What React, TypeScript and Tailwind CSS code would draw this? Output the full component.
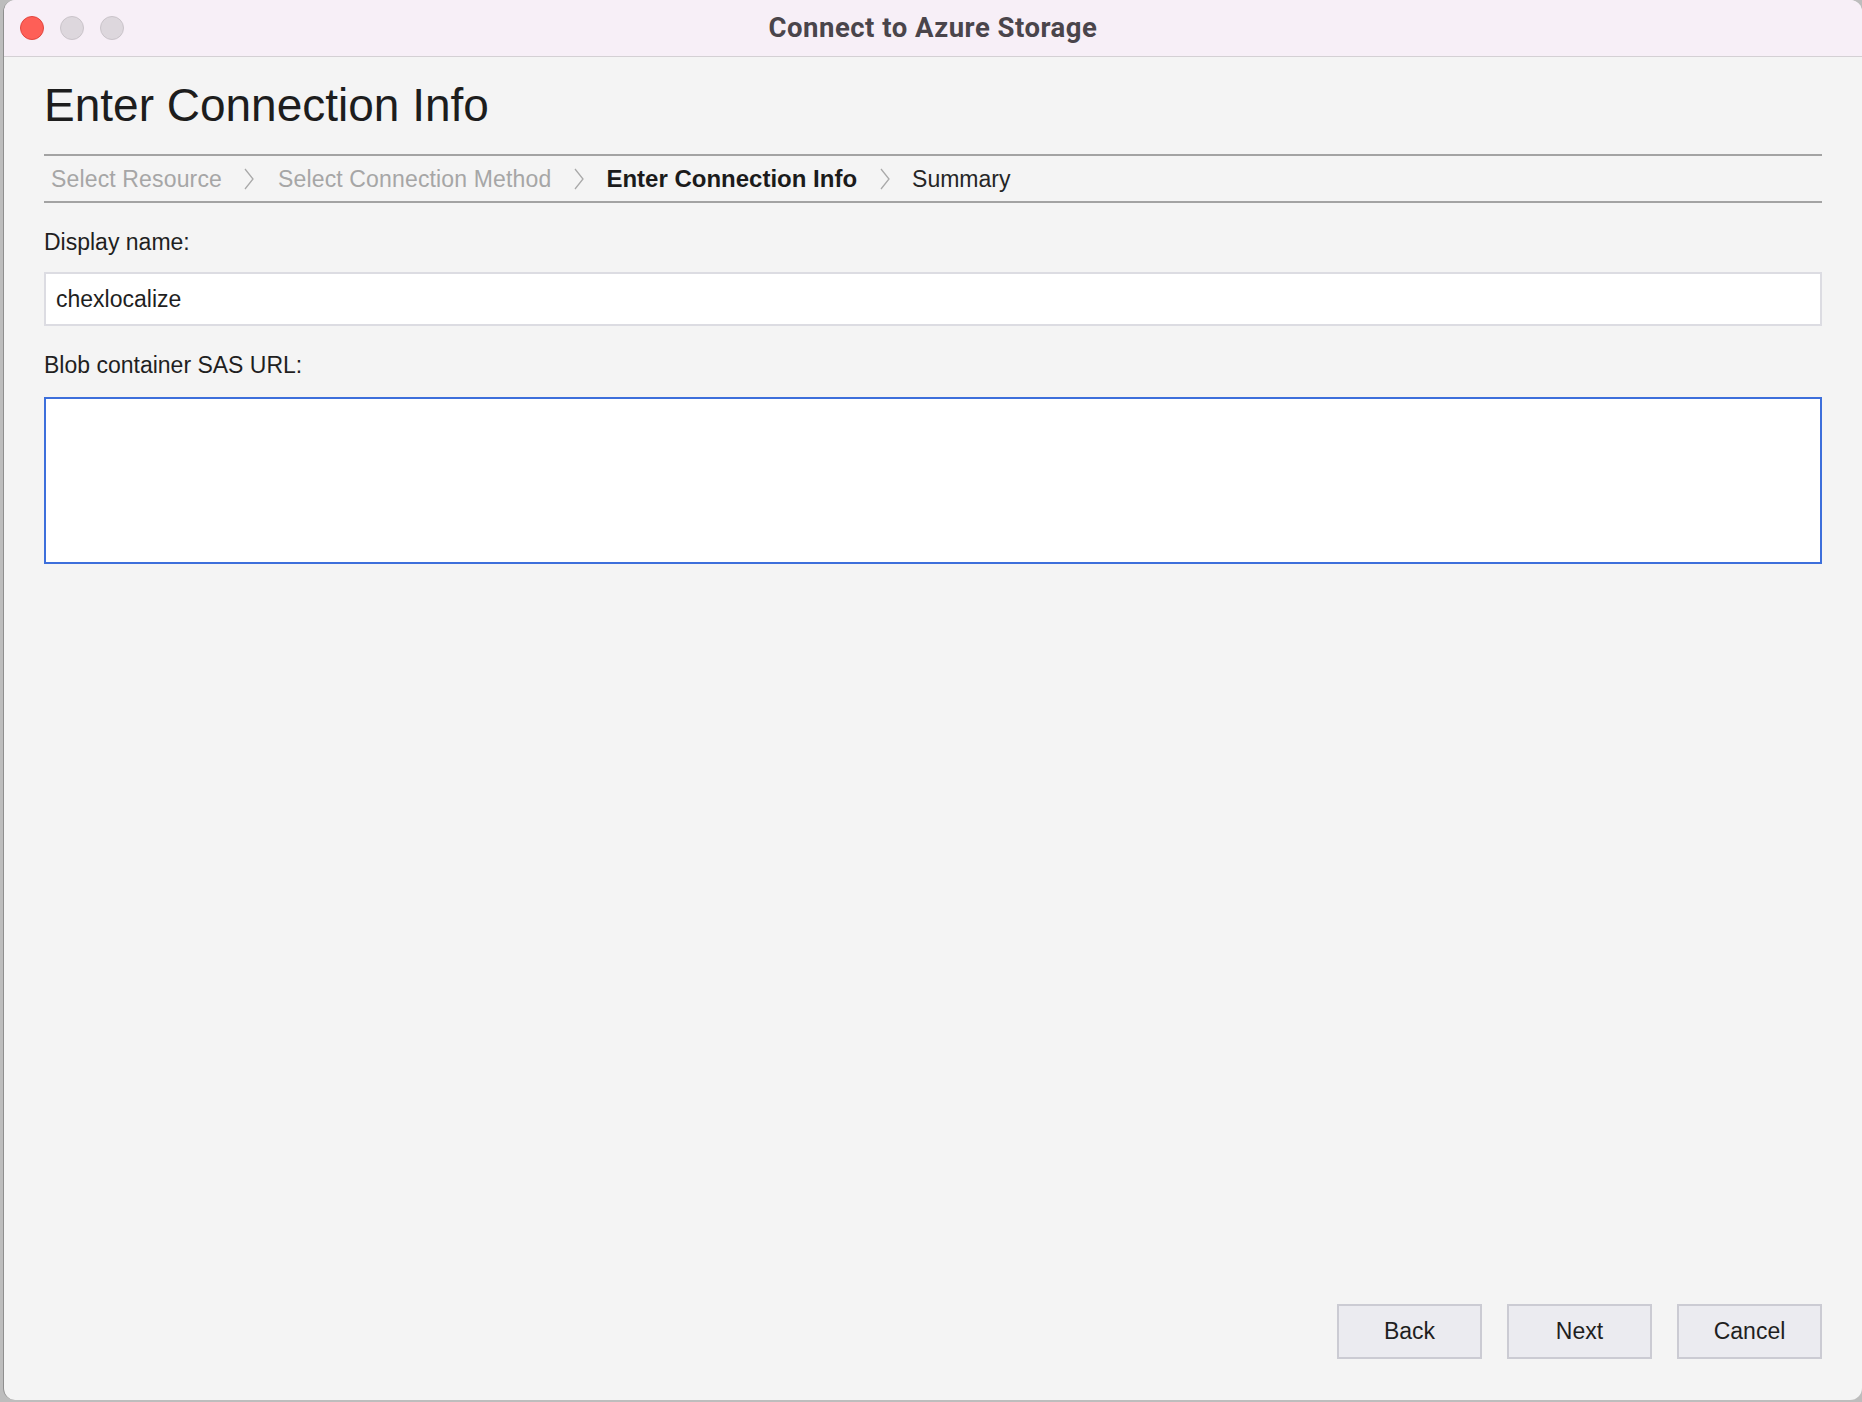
import React from "react";

function Chevron() {
  return (
    <svg width="12" height="24" viewBox="0 0 12 24" className="shrink-0">
      <path d="M2 2 L10 12 L2 22" fill="none" stroke="#a9a9a9" strokeWidth="1.3" />
    </svg>
  );
}

export default function App() {
  return (
    <div
      className="w-[1862px] h-[1402px] bg-[#bdbdbd] pl-[3px] overflow-hidden"
      style={{ fontFamily: '"Liberation Sans", Arial, sans-serif' }}
    >
      <div className="h-[1400px] w-[1859px] rounded-[12px] bg-[#f4f4f4] flex flex-col overflow-hidden border-l border-[#8e8e8e]">
        {/* title bar */}
        <div className="relative h-[57px] shrink-0 flex items-center pl-[16px] gap-[16px] bg-[#f7eff7] border-b border-[#d4d0d4]">
          <div className="w-[24px] h-[24px] rounded-full bg-[#fe5f57] border border-[#e2463f]" />
          <div className="w-[24px] h-[24px] rounded-full bg-[#ddd7dd] border border-[#cac4ca]" />
          <div className="w-[24px] h-[24px] rounded-full bg-[#ddd7dd] border border-[#cac4ca]" />
          <div className="absolute inset-0 flex items-center justify-center pointer-events-none">
            <span
              className="text-[27.5px] font-bold text-[#4a454b] tracking-[0.5px]"
              style={{ fontFamily: 'Roboto, "Liberation Sans", sans-serif' }}
            >
              Connect to Azure Storage
            </span>
          </div>
        </div>

        {/* content */}
        <div className="flex-1 flex flex-col px-[40px] pb-[41px]">
          <h1 className="mt-[20px] text-[46px] leading-[56px] text-[#1d1d1d] font-normal">
            Enter Connection Info
          </h1>

          <div className="mt-[21px] h-[49px] border-y-2 border-[#a3a3a3] flex items-center pl-[7px] text-[23px] leading-[26px]">
            <span className="text-[#a6a6a6] tracking-[0.15px]">Select Resource</span>
            <div className="ml-[21px] mr-[23px]">
              <Chevron />
            </div>
            <span className="text-[#a6a6a6] tracking-[0.15px]">Select Connection Method</span>
            <div className="ml-[22px] mr-[21px]">
              <Chevron />
            </div>
            <span className="text-[#1b1b1b] font-bold text-[24px]">Enter Connection Info</span>
            <div className="ml-[22px] mr-[21px]">
              <Chevron />
            </div>
            <span className="text-[#262626]">Summary</span>
          </div>

          <div className="mt-[26px] text-[23px] leading-[26px] text-[#1f1f1f]">Display name:</div>
          <div className="mt-[17px] h-[54px] border-2 border-[#dcdce2] bg-white flex items-center px-[10px] text-[23px] text-[#1f1f1f]">
            chexlocalize
          </div>

          <div className="mt-[26px] text-[23px] leading-[26px] text-[#1f1f1f]">Blob container SAS URL:</div>
          <div className="mt-[19px] h-[167px] border-2 border-[#3d6fdb] bg-white" />

          <div className="flex-1" />

          <div className="flex justify-end gap-[25px]">
            {["Back", "Next", "Cancel"].map((b) => (
              <div
                key={b}
                className="w-[145px] h-[55px] border-2 border-[#cbcbd3] bg-[#ebebf0] flex items-center justify-center text-[23px] text-[#1f1f1f]"
              >
                {b}
              </div>
            ))}
          </div>
        </div>
      </div>
    </div>
  );
}
